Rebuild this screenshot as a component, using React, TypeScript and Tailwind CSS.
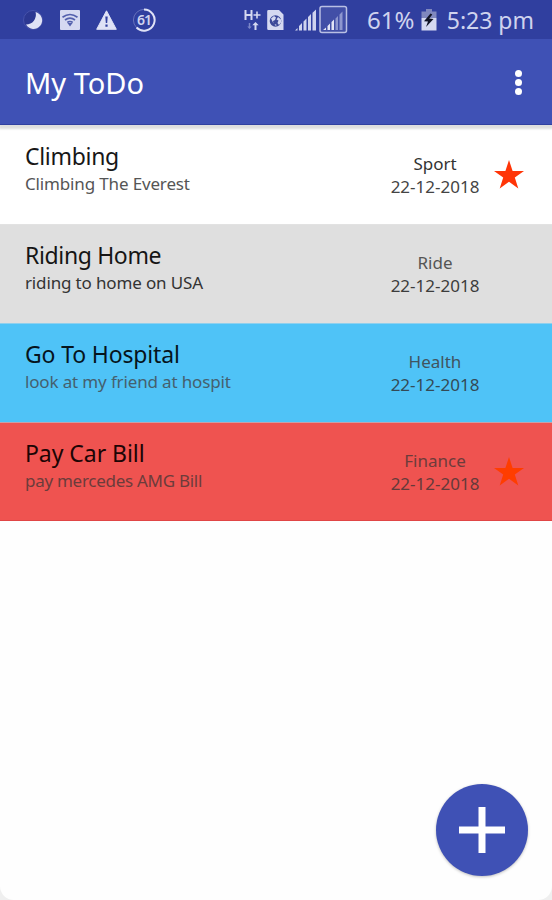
type Todo = {
  title: string;
  note: string;
  category: string;
  date: string;
  starred: boolean;
  rowClass: string;
  titleClass: string;
  noteClass: string;
  categoryClass: string;
  dateClass: string;
  starClass?: string;
};

const TODOS: Todo[] = [
  {
    title: 'Climbing',
    note: 'Climbing The Everest',
    category: 'Sport',
    date: '22-12-2018',
    starred: true,
    rowClass: 'border-t-transparent bg-white',
    titleClass: 'text-[#171717] tracking-[-0.3px]',
    noteClass: 'text-[#555] tracking-[-0.15px]',
    categoryClass: 'text-[#333]',
    dateClass: 'text-[#444]',
    starClass: 'text-[#ff3507]',
  },
  {
    title: 'Riding Home',
    note: 'riding to home on USA',
    category: 'Ride',
    date: '22-12-2018',
    starred: false,
    rowClass: 'border-t-[#e2e2e2] bg-[#dfdfdf]',
    titleClass: 'text-[#151515] tracking-[-0.36px]',
    noteClass: 'text-[#333] tracking-[-0.15px]',
    categoryClass: 'text-[#555]',
    dateClass: 'text-[#3c3c3c]',
  },
  {
    title: 'Go To Hospital',
    note: 'look at my friend at hospit',
    category: 'Health',
    date: '22-12-2018',
    starred: false,
    rowClass: 'border-t-[#8fd0ee] bg-[#4fc3f7]',
    titleClass: 'text-[#06141c] tracking-[-0.15px]',
    noteClass: 'text-[#45606e] tracking-[-0.15px]',
    categoryClass: 'text-[#41545f]',
    dateClass: 'text-[#344a56]',
  },
  {
    title: 'Pay Car Bill',
    note: 'pay mercedes AMG Bill',
    category: 'Finance',
    date: '22-12-2018',
    starred: true,
    rowClass: 'border-b border-t-[#c9a0a8] border-b-[#e04545] bg-[#ef5350]',
    titleClass: 'text-[#1c0505] tracking-[-0.05px]',
    noteClass: 'text-[#6c3c3b] tracking-[-0.28px]',
    categoryClass: 'text-[#6c3c3b]',
    dateClass: 'text-[#643a3a]',
    starClass: 'text-[#ff3d00]',
  },
];

function StatusBar() {
  return (
    <div className="flex h-[39px] items-center bg-[#303f9f] pl-[22px] pr-[18px] text-[#cfd3ee]">
      <svg width="22" height="22" viewBox="0 0 22 22" className="shrink-0">
        <circle cx="11" cy="11" r="9.5" fill="#2c3892" stroke="#4652ab" />
        <path d="M13.5 3A8.6 8.6 0 1 1 4 15.5 9.8 9.8 0 0 0 13.5 3z" fill="#dfe2f6" />
      </svg>
      <svg width="20" height="20" viewBox="0 0 20 20" className="ml-4 shrink-0">
        <rect width="20" height="20" rx="1" fill="#d5d9f1" />
        <g fill="none" stroke="#5360ad" strokeWidth="1.7">
          <path d="M2.5 7.2Q10 1.8 17.5 7.2" />
          <path d="M5 10Q10 6.2 15 10" />
          <path d="M7.3 12.5Q10 10.5 12.7 12.5" />
        </g>
        <path d="M7.5 13h5L10 16.5z" fill="#5360ad" />
      </svg>
      <svg width="21" height="20" viewBox="0 0 21 20" className="ml-4 shrink-0">
        <path d="M10.5.8 20.3 19.3H.7z" fill="#dfe2f6" stroke="#dfe2f6" strokeLinejoin="round" />
        <path d="M9.3 6.5h2.4l-.5 6.5H9.8zM9.4 14.5h2.2v2.2H9.4z" fill="#303f9f" />
      </svg>
      <div className="relative ml-[15px] flex h-6 w-6 shrink-0 items-center justify-center">
        <svg width="24" height="24" viewBox="0 0 24 24" className="absolute inset-0">
          <circle cx="12" cy="12" r="10.6" fill="none" stroke="#6671bb" strokeWidth="1" />
          <path d="M12 1.4A10.6 10.6 0 1 1 4.5 19.5" fill="none" stroke="#dfe2f6" strokeWidth="2" />
        </svg>
        <span className="text-[14px] font-semibold leading-none tracking-[-1px]">61</span>
      </div>

      <svg width="17" height="22" viewBox="0 0 17 22" className="ml-[88px] shrink-0">
        <g fill="none" stroke="#d5d9f1" strokeWidth="2">
          <path d="M1.5 1v10M7.5 1v10M1.5 6h6" />
          <path d="M9.5 6h7M13 2.5v7" strokeWidth="1.6" />
          <path d="M11.5 21v-6" />
          <path d="M5.5 14v4" stroke="#7b86c8" strokeWidth="1.5" />
        </g>
        <path d="M8.3 16.3 11.5 13l3.2 3.3z" fill="#d5d9f1" />
        <path d="M3.3 17.5h4.4L5.5 20z" fill="#7b86c8" />
      </svg>
      <svg width="17" height="20" viewBox="0 0 17 20" className="ml-[6px] shrink-0">
        <path d="M1.5 0H12l4.5 4.5V20h-15A1.3 1.3 0 0 1 .2 18.7V1.3A1.3 1.3 0 0 1 1.5 0z" fill="#d5d9f1" />
        <circle cx="8.5" cy="11" r="5.8" fill="#3b4899" />
        <path d="M4 8.5 7 6l2 1.5-1 2.5-2 1 .5 2.5zM11 7l3 2.5v3L12 15l-1.5-2 1-2.5-2-1zM7.5 14l2 .8-.5 1.5z" fill="#d5d9f1" />
      </svg>
      <svg width="23" height="22" viewBox="0 0 23 22" className="ml-[11px] shrink-0">
        <path d="M0 21.5 2.5 19v2.5zM4 21.5V17l3-3v7.5zM8.5 21.5v-9l3-3v12zM13 21.5V8l3-3v16.5zM17.5 21.5V3.8l3.5-3.3v21z" fill="#cfd3ee" />
      </svg>
      <svg width="29" height="29" viewBox="0 0 29 29" className="ml-px shrink-0">
        <rect x="1" y="1.5" width="26.5" height="26" rx="2" fill="#424fa7" stroke="#b9bfe4" strokeWidth="1.5" />
        <path d="M4 25 7 22.5V25zM8.5 25v-4l2.5-2.5V25zM12.5 25v-8l2.5-2.5V25z" fill="#e3e5f6" />
        <path d="M16.5 25V13.5l2.5-2.5v14zM20.5 25V9.5L23.5 6.5V25z" fill="#8d96cf" />
      </svg>
      <span className="ml-[19px] pt-px text-[24px] leading-[38px]">61%</span>
      <svg width="16" height="22" viewBox="0 0 16 22" className="ml-[7px] shrink-0">
        <path d="M5 0h6v2.5h4.5V9H.5V2.5H5z" fill="#8088be" />
        <path d="M.5 9h15v12.5H.5z" fill="#d5d9f1" />
        <path d="M9.5 4.5 3 12.2l4 .3-2 5.5 7.5-8-4.2-.5 3-4z" fill="#111425" />
      </svg>
      <span className="ml-auto whitespace-nowrap pt-[2px] text-[23px] leading-[37px]">5:23 pm</span>
    </div>
  );
}

function Star({ className = '' }: { className?: string }) {
  return (
    <svg width="30" height="29" viewBox="0 0 30 29" className={className}>
      <path
        d="M15 0 18.6 11H30L20.8 17.6 24.3 28.5 15 21.8 5.7 28.5 9.2 17.6 0 11H11.4z"
        fill="currentColor"
      />
    </svg>
  );
}

function TodoRow({ todo }: { todo: Todo }) {
  return (
    <li className={`flex h-[99px] border-t pl-[25px] ${todo.rowClass}`}>
      <div className="flex-1 whitespace-nowrap pt-4">
        <h2 className={`text-[23px] leading-7 ${todo.titleClass}`}>{todo.title}</h2>
        <p className={`mt-[2px] text-[17px] leading-6 ${todo.noteClass}`}>{todo.note}</p>
      </div>
      <div className="w-[100px] pt-[25.5px] text-center text-[17px] leading-[23.5px]">
        <p className={todo.categoryClass}>{todo.category}</p>
        <p className={todo.dateClass}>{todo.date}</p>
      </div>
      <div className="w-[67px] pl-[9px] pt-[34px]">
        {todo.starred && <Star className={todo.starClass} />}
      </div>
    </li>
  );
}

export default function App() {
  return (
    <div className="h-[900px] w-[552px] bg-[#efefef] font-['Noto_Sans',sans-serif]">
      <div className="relative flex h-full flex-col overflow-hidden rounded-b-[14px] bg-[#fefefe]">
        <StatusBar />
        <header className="relative flex h-[86px] items-center justify-between border-b border-[#3040a0] bg-[#3f51b5] pl-[25px] pr-[30px] text-white shadow-[0_3px_2px_1px_#dedede]">
          <h1 className="pt-[2px] text-[29px] leading-[84px]">My ToDo</h1>
          <button aria-label="More options" className="flex flex-col gap-[2px] pt-[2px]">
            <span className="size-[7px] rounded-full bg-white" />
            <span className="size-[7px] rounded-full bg-white" />
            <span className="size-[7px] rounded-full bg-white" />
          </button>
        </header>

        <ul>
          {TODOS.map((todo) => (
            <TodoRow key={todo.title} todo={todo} />
          ))}
        </ul>

        <button
          aria-label="Add todo"
          className="absolute bottom-6 right-6 flex size-[92px] items-center justify-center rounded-full bg-[#3f51b5] shadow-[0_1px_3px_rgba(0,0,0,0.25)]"
        >
          <svg width="46" height="46" viewBox="0 0 46 46">
            <path d="M23 0v46M0 23h46" stroke="#fff" strokeWidth="7" />
          </svg>
        </button>
      </div>
    </div>
  );
}
